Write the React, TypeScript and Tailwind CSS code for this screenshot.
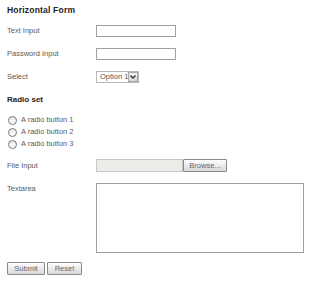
import React from 'react'

const font = { fontFamily: '"Liberation Sans", Arial, sans-serif' }

function Label({ children }: { children: React.ReactNode }) {
  return <div className="w-[89px] shrink-0 text-[7.5px] leading-[10px] text-[#5a5a5a]">{children}</div>
}

function Btn({ children, w }: { children: React.ReactNode; w: string }) {
  return (
    <div
      className={`${w} h-[13px] flex items-center justify-center border border-[#8a8a8a] bg-gradient-to-b from-[#fdfdfd] to-[#d8d8d8] text-[7.5px] leading-[10px] text-[#666] rounded-[1px] whitespace-nowrap`}
    >
      {children}
    </div>
  )
}

function Radio({ label }: { label: string }) {
  return (
    <div className="flex items-center h-[12px]">
      <div className="w-[9px] h-[9px] rounded-full border border-[#777] bg-gradient-to-b from-[#e8e8e8] to-white" />
      <span className="ml-[4px] text-[7.5px] leading-[10px] text-[#5a5a5a]">{label}</span>
    </div>
  )
}

export default function App() {
  return (
    <div className="w-[320px] h-[281px] bg-white pl-[7px] pt-[5px]" style={font}>
      <div className="text-[8.5px] font-bold text-[#222] h-[10px] leading-[10px] tracking-[0.2px]">Horizontal Form</div>

      <div className="flex items-center mt-[10px] h-[12px]">
        <Label>Text Input</Label>
        <div className="w-[80px] h-[12px] border border-[#a0a0a0] bg-white" />
      </div>

      <div className="flex items-center mt-[11px] h-[12px]">
        <Label>Password Input</Label>
        <div className="w-[80px] h-[12px] border border-[#a0a0a0] bg-white" />
      </div>

      <div className="flex items-center mt-[11px] h-[12px]">
        <Label>Select</Label>
        <div className="w-[43px] h-[12px] flex items-center border border-[#b8b8b8] bg-white">
          <span className="text-[7.5px] leading-[10px] text-[#555] pl-[3px] flex-1 whitespace-nowrap">Option 1</span>
          <div className="w-[10px] h-[10px] flex items-center justify-center border border-[#aaa] bg-gradient-to-b from-[#f4f4f4] to-[#d6d6d6]">
            <svg width="6" height="4" viewBox="0 0 6 4">
              <path d="M0.5 0.5 L3 3 L5.5 0.5" stroke="#333" strokeWidth="1.3" fill="none" />
            </svg>
          </div>
        </div>
      </div>

      <div className="mt-[11px] text-[8px] font-bold text-[#222] h-[12px] leading-[12px]">Radio set</div>

      <div className="mt-[8px] ml-[1px]">
        <Radio label="A radio button 1" />
        <Radio label="A radio button 2" />
        <Radio label="A radio button 3" />
      </div>

      <div className="flex items-center mt-[9px] h-[13px]">
        <Label>File Input</Label>
        <div className="w-[87px] h-[13px] border border-[#c8c8c8] bg-[#ecebe7]" />
        <Btn w="w-[44px]">Browse...</Btn>
      </div>

      <div className="flex mt-[11px]">
        <Label>
          <div className="mt-[1px]">Textarea</div>
        </Label>
        <div className="w-[208px] h-[70px] border border-[#a0a0a0] bg-white" />
      </div>

      <div className="flex mt-[9px] gap-[2px]">
        <Btn w="w-[38px]">Submit</Btn>
        <Btn w="w-[35px]">Reset</Btn>
      </div>
    </div>
  )
}
